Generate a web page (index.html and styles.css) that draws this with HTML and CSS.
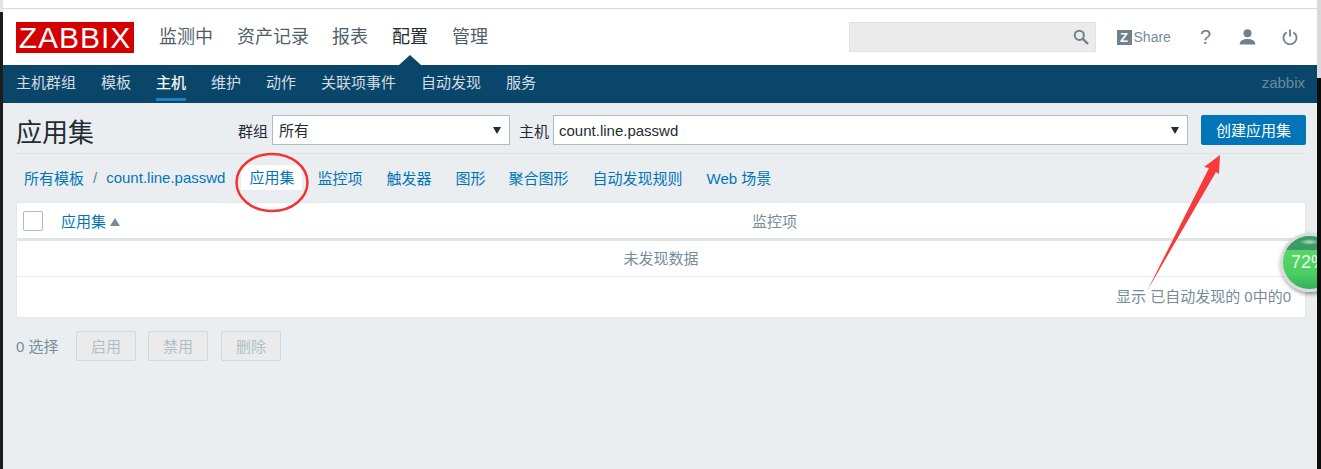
FILE: index.html
```html
<!DOCTYPE html>
<html lang="zh-CN">
<head>
<meta charset="utf-8">
<title>应用集</title>
<link rel="stylesheet" href="styles.css">
</head>
<body>
<div class="page">
  <div class="topstrip"></div>
  <header class="header">
    <a class="logo">ZABBIX</a>
    <nav class="mainnav">
      <a>监测中</a><a>资产记录</a><a>报表</a><a class="on">配置</a><a>管理</a>
    </nav>
    <div class="tools">
      <div class="search">
        <svg class="search-icon" width="16" height="16" viewBox="0 0 16 16"><circle cx="6.3" cy="6.3" r="4.6" fill="none" stroke="#6f818c" stroke-width="2"/><path d="M9.8 9.8 15 15" stroke="#6f818c" stroke-width="2.4"/></svg>
      </div>
      <a class="share"><span class="zbox">Z</span>Share</a>
      <span class="help">?</span>
      <svg class="user" width="17" height="16" viewBox="0 0 17 16"><circle cx="8.5" cy="4.2" r="4" fill="#6f818c"/><path d="M.7 15.500c0-4 3.500-5.500 7.800-5.500s7.800 1.500 7.800 5.500z" fill="#6f818c"/></svg>
      <svg class="power" width="16" height="16" viewBox="0 0 16 16"><path d="M4.700 3.200a6.500 6.500 0 1 0 6.600 0" fill="none" stroke="#6f818c" stroke-width="1.800"/><path d="M8 .5v7" stroke="#6f818c" stroke-width="1.800"/></svg>
    </div>
  </header>
  <div class="subnav">
    <a>主机群组</a><a>模板</a><a class="on">主机</a><a>维护</a><a>动作</a><a>关联项事件</a><a>自动发现</a><a>服务</a>
    <span class="who">zabbix</span>
  </div>
  <main class="content">
    <div class="titlerow">
      <h1>应用集</h1>
      <label class="flabel first">群组</label>
      <div class="select small">所有<i class="caret"></i></div>
      <label class="flabel">主机</label>
      <div class="select large">count.line.passwd<i class="caret"></i></div>
      <button class="create">创建应用集</button>
    </div>
    <div class="crumbs">
      <a>所有模板</a><span class="slash">/</span><a>count.line.passwd</a>
      <a class="tab">应用集</a><a>监控项</a><a>触发器</a><a>图形</a><a class="tight">聚合图形</a><a>自动发现规则</a><a>Web 场景</a>
    </div>
    <section class="table">
      <div class="thead">
        <span class="check"></span>
        <a class="sort">应用集<i class="up"></i></a>
        <span class="col2">监控项</span>
      </div>
      <div class="empty">未发现数据</div>
      <div class="tfoot">显示 已自动发现的 0中的0</div>
    </section>
    <div class="actions">
      <span class="count">0 选择</span>
      <button class="btn">启用</button>
      <button class="btn wide">禁用</button>
      <button class="btn">删除</button>
    </div>
  </main>
  <svg class="marks" width="1314" height="469" viewBox="0 0 1314 469">
    <ellipse cx="269" cy="182.500" rx="35.500" ry="28.500" fill="none" stroke="#f23333" stroke-width="2.500"/>
    <path d="M1144 291 1206 168 1201 167 1217 155 1216 174 1213 172z" fill="#f73a3a"/>
  </svg>
  <div class="gauge"><div class="cap"></div><span>72%</span></div>
</div>
</body>
</html>
```
FILE: styles.css
```css
* { box-sizing: border-box; }
html, body { margin: 0; height: 100%; }
body {
  background:
    linear-gradient(#e4e4e4 12px, #1c1c1c 12px) left top / 3px 100% no-repeat,
    linear-gradient(#d9dadb 78px, #0c0c0c 78px) right top / 4px 100% no-repeat,
    #111;
  font: 15px "Liberation Sans", "Noto Sans CJK SC", sans-serif;
  overflow: hidden;
}
a { cursor: pointer; }
.page {
  position: relative;
  width: 1314px;
  height: 469px;
  margin-left: 3px;
  overflow: hidden;
  background: #ebeef1;
}
.topstrip { height: 9px; background: #fff; border-bottom: 1px solid #d9d9d9; }
.header {
  height: 56px;
  background: #fff;
  display: flex;
  align-items: flex-start;
  padding: 13px 0 0 13px;
}
.logo {
  width: 118px;
  height: 31px;
  background: #d40000;
  color: #fff;
  font-size: 30px;
  line-height: 31px;
  letter-spacing: 1px;
  text-align: center;
}
.mainnav { display: flex; margin-left: 13px; }
.mainnav a {
  position: relative;
  padding: 0 12px;
  font-size: 18px;
  line-height: 30px;
  color: #4f5f6a;
}
.mainnav a:nth-child(3) { margin-left: -1px; }
.mainnav a.on { color: #1f2c33; }
.mainnav a.on::after {
  content: "";
  position: absolute;
  left: 50%;
  top: 33px;
  margin-left: -11px;
  border: 10px solid transparent;
  border-top: 0;
  border-left-width: 11px;
  border-right-width: 11px;
  border-bottom-color: #0a466a;
}
.tools { display: flex; align-items: center; margin-left: auto; height: 30px; padding-right: 19px; }
.search {
  width: 247px;
  height: 30px;
  background: #ebebeb;
  border: 1px solid #e2e2e2;
  display: flex;
  align-items: center;
  justify-content: flex-end;
  padding-right: 6px;
}
.share { display: flex; align-items: center; margin-left: 21px; color: #768d99; font-size: 14px; }
.zbox {
  width: 15px;
  height: 15px;
  margin-right: 2px;
  background: #6f818c;
  color: #fff;
  font-size: 13px;
  font-weight: 700;
  line-height: 15px;
  text-align: center;
}
.help { margin-left: 29px; color: #6f818c; font-size: 20px; }
.user { margin-left: 28px; }
.power { margin-left: 26px; }
.subnav {
  height: 38px;
  background: #0a466a;
  display: flex;
  gap: 25px;
  padding: 0 12px 0 13px;
  line-height: 36px;
}
.subnav a { height: 36px; color: #d3dee5; }
.subnav a.on { color: #fff; border-bottom: 3px solid #1b82c4; -webkit-text-stroke: .2px #fff; }
.subnav .who { margin-left: auto; color: #6d8a9c; font-size: 15px; }
.content { padding: 0 11px 0 13px; }
.titlerow {
  height: 51px;
  display: flex;
  align-items: center;
  border-bottom: 1px solid #dfe3e6;
  padding-top: 3px;
}
h1 { margin: 2px 0 0; width: 222px; font-size: 26px; font-weight: 400; color: #1f2c33; }
.flabel { color: #1f2c33; margin: 2px 4px 0 9px; }
.flabel.first { margin-left: 0; }
.select {
  position: relative;
  height: 30px;
  background: #fff;
  border: 1px solid #acbbc4;
  color: #1f2c33;
  line-height: 30px;
  padding-left: 6px;
}
.select.small { width: 238px; }
.select.large { width: 635px; padding-left: 5px; }
.caret {
  position: absolute;
  right: 8px;
  top: 11px;
  border: 4px solid transparent;
  border-top: 7px solid #1f2c33;
  border-bottom: 0;
}
.create {
  width: 105px;
  height: 30px;
  margin-left: 13px;
  background: #0275b8;
  border: 0;
  border-radius: 2px;
  color: #fff;
  font: inherit;
  padding: 0;
}
.crumbs {
  height: 48px;
  display: flex;
  align-items: center;
  gap: 24px;
  padding: 0 0 2px 8px;
  color: #0275b8;
}
.slash { margin: 0 -15px; color: #4f7fa0; }
.tab {
  background: #fff;
  padding: 0 8px;
  height: 25px;
  line-height: 25px;
  margin: 0 -9px 0 -8px;
  box-shadow: 0 0 1px #dfe4e7;
}
.tight { margin-left: -1px; }
.table { width: 1290px; background: #fff; border: 1px solid #e3e7ea; }
.thead {
  height: 38px;
  display: flex;
  align-items: center;
  border-bottom: 3px solid #dfe4e7;
  padding-left: 6px;
}
.check { width: 20px; height: 20px; border: 1px solid #acbbc4; border-radius: 2px; }
.sort { margin-left: 18px; color: #0275b8; display: flex; align-items: center; }
.up {
  margin: 3px 0 0 4px;
  border: 5px solid transparent;
  border-bottom: 8px solid #768d99;
  border-top: 0;
}
.col2 { margin-left: 632px; color: #768d99; }
.empty {
  height: 36px;
  line-height: 36px;
  text-align: center;
  color: #768d99;
  border-bottom: 1px solid #e8ebed;
}
.tfoot {
  height: 40px;
  line-height: 40px;
  text-align: right;
  padding-right: 14px;
  color: #768d99;
}
.actions { display: flex; align-items: center; height: 30px; margin-top: 13px; color: #768d99; }
.count { width: 60px; padding-bottom: 2px; }
.btn {
  width: 60px;
  height: 30px;
  margin-right: 12px;
  background: #ebebeb;
  border: 1px solid #d0d9de;
  border-radius: 2px;
  color: #b0bfc7;
  font: inherit;
  padding: 0 0 2px;
}
.btn.wide { margin-right: 13px; }
.marks { position: absolute; left: 0; top: 0; pointer-events: none; }
.gauge {
  position: absolute;
  left: 1277px;
  top: 233px;
  width: 59px;
  height: 59px;
  border-radius: 50%;
  border: 3px solid #d9dcdc;
  background: linear-gradient(#55d566 30%, #4ccf62 70%, #35b05a);
  box-shadow: 1px 2px 4px rgba(0,0,0,.45);
  overflow: hidden;
  color: #eafbe9;
  font-size: 18px;
  line-height: 53px;
  padding-left: 8px;
  white-space: nowrap;
}
.gauge span { position: relative; }
.cap {
  position: absolute;
  left: -4px;
  right: -4px;
  top: -3px;
  height: 17px;
  background: radial-gradient(ellipse 10px 3px at 50% 9px, #b6e0c8, #3a9a68 100%);
}
```
